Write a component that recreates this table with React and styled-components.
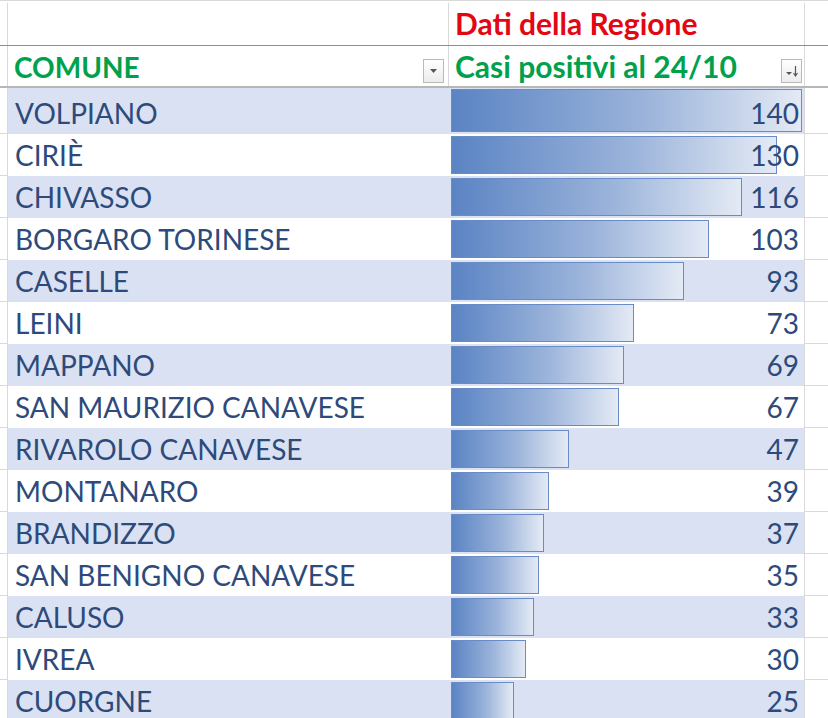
import React from 'react';
import styled, { createGlobalStyle } from 'styled-components';

const GlobalStyle = createGlobalStyle`
  body {
    margin: 0;
    background: #ffffff;
    font-family: Lato, "Open Sans", sans-serif;
  }
`;

const COLS = '8px 441px 356px 1fr';
const GRID = '#d9d9d9';

const Sheet = styled.div`
  width: 828px;
  height: 718px;
  overflow: hidden;
  padding-top: 2px;
  box-sizing: border-box;
  border-top: 1px solid ${GRID};
  background: #ffffff;
`;

const Row = styled.div`
  display: grid;
  grid-template-columns: ${COLS};
  height: ${props => props.h}px;
  border-bottom: ${props => props.line || 'none'};
  box-sizing: border-box;
`;

const Gutter = styled.div`
  border-right: 1px solid ${GRID};
  border-bottom: ${props => (props.lined ? `1px solid ${GRID}` : 'none')};
`;

const Filler = styled.div`
  border-bottom: ${props => (props.lined ? `1px solid ${GRID}` : 'none')};
`;

const HeadCell = styled.div`
  display: flex;
  align-items: flex-end;
  justify-content: space-between;
  padding: 0 ${props => props.pr || 4}px 3px 6px;
  border-right: 1px solid ${GRID};
  font-weight: 700;
  font-size: ${props => props.size || 30}px;
  color: ${props => props.color || '#00a14b'};
  line-height: 1;
  white-space: nowrap;
`;

const HeadText = styled.span`
  padding-bottom: ${props => props.pb || 2}px;
`;

const FilterButton = styled.div`
  width: 19px;
  height: 22px;
  flex-shrink: 0;
  border: 1px solid #b9b9b9;
  background: linear-gradient(#ffffff, #ececec);
  display: flex;
  align-items: center;
  justify-content: center;
`;

const NameCell = styled.div`
  background: ${props => (props.striped ? '#d9e1f2' : '#ffffff')};
  display: flex;
  align-items: center;
  padding: ${props => props.pt || 0}px 0 0 7px;
  font-size: 28px;
  color: #2e4a7b;
  white-space: nowrap;
`;

const ValueCell = styled.div`
  position: relative;
  background: ${props => (props.striped ? '#d9e1f2' : '#ffffff')};
  display: flex;
  align-items: center;
  justify-content: flex-end;
  padding: ${props => props.pt || 0}px 5px 0 0;
  border-right: 1px solid ${GRID};
  font-size: 28px;
  color: #2e4a7b;
`;

const Bar = styled.div`
  position: absolute;
  left: 2px;
  top: ${props => props.top}px;
  bottom: 2px;
  box-sizing: border-box;
  border: 1px solid #6a8cc6;
  background: linear-gradient(90deg, #5b84c4 0%, #9ab3da 55%, #e4eaf5 100%);
`;

const Number = styled.span`
  position: relative;
`;

const data = [
  ['VOLPIANO', 140],
  ['CIRIÈ', 130],
  ['CHIVASSO', 116],
  ['BORGARO TORINESE', 103],
  ['CASELLE', 93],
  ['LEINI', 73],
  ['MAPPANO', 69],
  ['SAN MAURIZIO CANAVESE', 67],
  ['RIVAROLO CANAVESE', 47],
  ['MONTANARO', 39],
  ['BRANDIZZO', 37],
  ['SAN BENIGNO CANAVESE', 35],
  ['CALUSO', 33],
  ['IVREA', 30],
  ['CUORGNE', 25],
];

const MAX = 140;
const FULL = 351;

const DropArrow = () => (
  <svg width="9" height="6" viewBox="0 0 9 6">
    <path d="M1 1 L8 1 L4.5 5 Z" fill="#555" />
  </svg>
);

const SortArrow = () => (
  <svg width="14" height="14" viewBox="0 0 14 14">
    <path d="M1 8 L7 8 L4 11 Z" fill="#555" />
    <path d="M10.5 2 L10.5 11" stroke="#555" strokeWidth="1.2" />
    <path d="M8.5 9 L10.5 12 L12.5 9" stroke="#555" strokeWidth="1.1" fill="none" />
  </svg>
);

export default function App() {
  return (
    <>
      <GlobalStyle />
      <Sheet>
        <Row h={43} line="1px solid #7f8fa8">
          <Gutter />
          <HeadCell />
          <HeadCell color="#e30613">
            <HeadText pb={4}>Dati della Regione</HeadText>
          </HeadCell>
          <Filler />
        </Row>
        <Row h={42} line="2px solid #b7b7b7">
          <Gutter />
          <HeadCell size={28}>
            <HeadText>COMUNE</HeadText>
            <FilterButton>
              <DropArrow />
            </FilterButton>
          </HeadCell>
          <HeadCell pr={2}>
            <HeadText>Casi positivi al 24/10</HeadText>
            <FilterButton>
              <SortArrow />
            </FilterButton>
          </HeadCell>
          <Filler />
        </Row>
        {data.map(([name, value], i) => {
          const first = i === 0;
          const striped = i % 2 === 0;
          return (
            <Row key={name} h={first ? 46 : 42}>
              <Gutter lined />
              <NameCell striped={striped} pt={first ? 4 : 0}>
                {name}
              </NameCell>
              <ValueCell striped={striped} pt={first ? 4 : 0}>
                <Bar top={first ? 1 : 2} style={{ width: `${(FULL * value) / MAX}px` }} />
                <Number>{value}</Number>
              </ValueCell>
              <Filler lined />
            </Row>
          );
        })}
      </Sheet>
    </>
  );
}
